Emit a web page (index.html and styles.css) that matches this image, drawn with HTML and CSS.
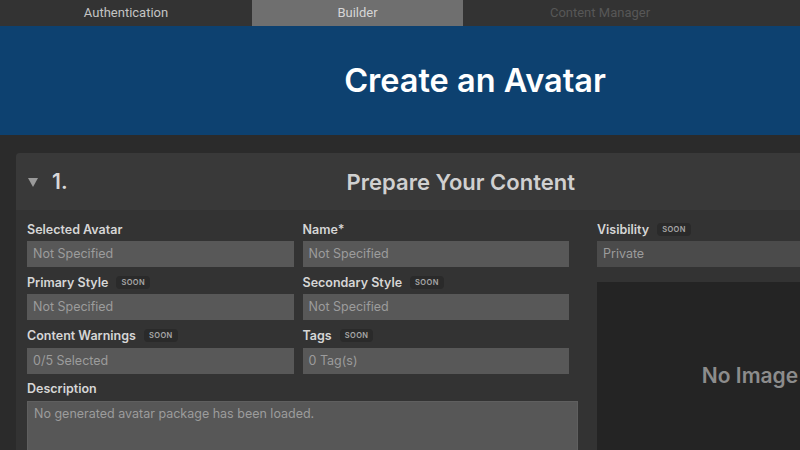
FILE: index.html
```html
<!DOCTYPE html>
<html>
<head>
    <title>Create an Avatar</title>
    <link rel="stylesheet" href="styles.css">
</head>
<body>
    <div class="app">
        <div class="tabs">
            <div class="tab tab-auth">Authentication</div>
            <div class="tab tab-builder active">Builder</div>
            <div class="tab tab-cm disabled">Content Manager</div>
        </div>

        <div class="banner">
            <h1>Create an Avatar</h1>
        </div>

        <div class="content">
            <div class="panel">
                <div class="panel-head">
                    <span class="arrow"></span>
                    <span class="step">1.</span>
                    <span class="panel-title">Prepare Your Content</span>
                </div>
                <div class="panel-body">
                    <div class="form-left">
                        <div class="field">
                            <div class="label">Selected Avatar</div>
                            <div class="input">Not Specified</div>
                        </div>
                        <div class="field">
                            <div class="label">Name*</div>
                            <div class="input">Not Specified</div>
                        </div>
                        <div class="field">
                            <div class="label">Primary Style <span class="soon">SOON</span></div>
                            <div class="input">Not Specified</div>
                        </div>
                        <div class="field">
                            <div class="label">Secondary Style <span class="soon">SOON</span></div>
                            <div class="input">Not Specified</div>
                        </div>
                        <div class="field">
                            <div class="label">Content Warnings <span class="soon">SOON</span></div>
                            <div class="input">0/5 Selected</div>
                        </div>
                        <div class="field">
                            <div class="label">Tags <span class="soon">SOON</span></div>
                            <div class="input">0 Tag(s)</div>
                        </div>
                        <div class="field wide">
                            <div class="label">Description</div>
                            <div class="input textarea">No generated avatar package has been loaded.</div>
                        </div>
                    </div>
                    <div class="form-right">
                        <div class="field">
                            <div class="label">Visibility <span class="soon">SOON</span></div>
                            <div class="input dark">Private</div>
                        </div>
                        <div class="preview">No Image</div>
                    </div>
                </div>
            </div>
        </div>
    </div>
</body>
</html>
```

FILE: styles.css
```css
html, body {
    margin: 0;
    padding: 0;
    overflow: hidden;
    background-color: #2b2b2b;
}
.app {
    width: 950px;
    font-family: Inter, 'Noto Sans', Arial, sans-serif;
}

.tabs {
    display: flex;
    height: 26px;
    background-color: #333333;
}
.tab {
    font-family: Roboto, Arial, sans-serif;
    font-size: 13px;
    line-height: 26px;
    text-align: center;
    color: #c4c4c4;
}
.tab-auth { width: 252px; }
.tab-builder { width: 211px; }
.tab-cm { width: 274px; }
.tab.active {
    background-color: #6f6f6f;
    color: #d6d6d6;
}
.tab.disabled {
    color: #575757;
}

.banner {
    height: 109px;
    background-color: #0d4170;
    display: flex;
    align-items: center;
    justify-content: center;
}
.banner h1 {
    margin: 0;
    font-size: 32.5px;
    font-weight: 600;
    color: #ffffff;
}

.content {
    padding: 18px 16px;
}
.panel {
    border-radius: 4px;
    overflow: hidden;
    background-color: #333333;
}
.panel-head {
    height: 57px;
    display: flex;
    align-items: center;
    padding-left: 12px;
    padding-right: 80px;
    background-color: #393939;
}
.arrow {
    width: 0;
    height: 0;
    border-left: 5.5px solid transparent;
    border-right: 5.5px solid transparent;
    border-top: 9px solid #9a9a9a;
    margin-top: 1px;
}
.step {
    margin-left: 14px;
    font-size: 21px;
    font-weight: 600;
    color: #d8d8d8;
}
.panel-title {
    flex: 1;
    text-align: center;
    font-size: 22px;
    font-weight: 600;
    color: #d0d0d0;
}

.panel-body {
    display: flex;
    align-items: flex-start;
    gap: 19px;
    padding: 11px 11px 20px;
}
.form-left {
    width: 551px;
    display: grid;
    grid-template-columns: 1fr 1fr;
    row-gap: 7.3px;
}
.form-right {
    width: 306px;
}
.field {
    padding-right: 9px;
}
.field.wide {
    grid-column: span 2;
    padding-right: 0;
}
.form-right .field {
    padding-right: 0;
}
.label {
    height: 16px;
    margin-bottom: 4px;
    display: flex;
    align-items: center;
    gap: 8px;
    font-size: 12.5px;
    font-weight: 600;
    color: #d6d6d6;
}
.soon {
    font-size: 7.5px;
    font-weight: 600;
    letter-spacing: 0.4px;
    color: #a8a8a8;
    background-color: #2a2a2a;
    border-radius: 4px;
    padding: 2px 5px;
}
.input {
    height: 26px;
    line-height: 26px;
    padding: 0 6px;
    background-color: #585858;
    font-size: 12.5px;
    color: #9c9c9c;
}
.input.dark {
    background-color: #4b4b4b;
}
.input.textarea {
    height: 60px;
    line-height: 24px;
    border: 1px solid #5f5f5f;
    background-color: #575757;
}
.preview {
    margin-top: 15px;
    height: 186px;
    background-color: #242424;
    display: flex;
    align-items: center;
    justify-content: center;
    font-size: 21px;
    font-weight: 600;
    color: #8c8c8c;
}
```
